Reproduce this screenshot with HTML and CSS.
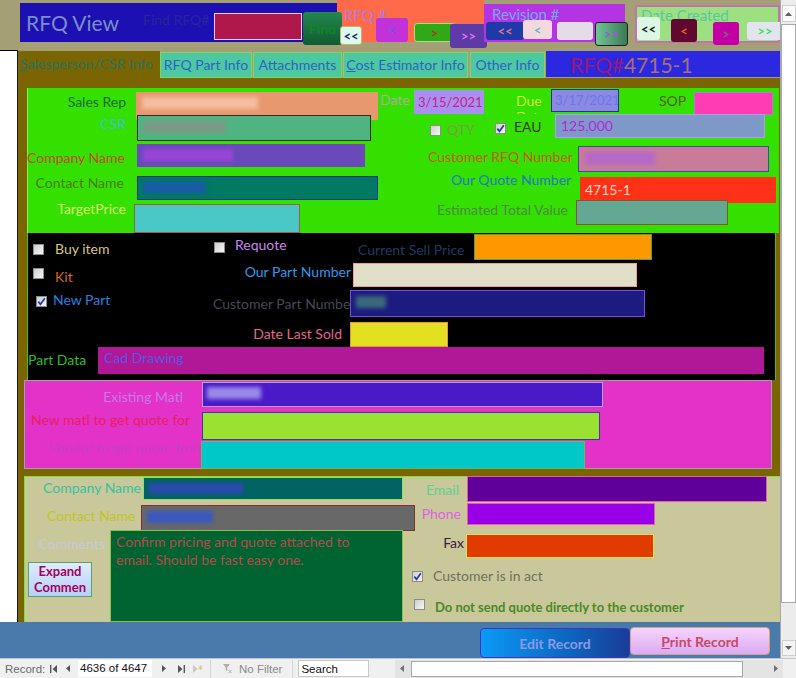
FILE: index.html
```html
<!DOCTYPE html>
<html>
<head>
<meta charset="utf-8">
<title>RFQ View</title>
<link rel="stylesheet" href="styles.css">
</head>
<body>
<div class="screen">
  <div class="app">
    <header class="hdr">
      <div class="title-box">
        <span class="title">RFQ View</span>
        <span class="lbl find-label">Find RFQ#</span>
        <span class="find-input"></span>
        <span class="btn find-btn">Find</span>
      </div>
      <div class="navbox rfq-box">
        <span class="nav-label">RFQ #</span>
        <div class="nav-btns">
          <span class="btn r1">&lt;&lt;</span>
          <span class="btn r2">&lt;</span>
          <span class="btn r3">&gt;</span>
          <span class="btn r4">&gt;&gt;</span>
        </div>
      </div>
      <div class="navbox rev-box">
        <span class="nav-label">Revision #</span>
        <div class="nav-btns">
          <span class="btn v1">&lt;&lt;</span>
          <span class="btn v2">&lt;</span>
          <span class="btn v3"></span>
          <span class="btn v4">&gt;&gt;</span>
        </div>
      </div>
      <div class="navbox dc-box">
        <span class="nav-label">Date Created</span>
        <div class="nav-btns">
          <span class="btn d1">&lt;&lt;</span>
          <span class="btn d2">&lt;</span>
          <span class="btn d3">&gt;</span>
          <span class="btn d4">&gt;&gt;</span>
        </div>
      </div>
    </header>

    <div class="main">
      <div class="selector"></div>
      <div class="form">
        <nav class="tabs">
          <span class="tab-active"><u>S</u>alesperson/CSR Info</span>
          <span class="tab t-part">RFQ Part Info</span>
          <span class="tab t-att">Attachments</span>
          <span class="tab t-cost"><u>C</u>ost Estimator Info</span>
          <span class="tab t-other">Other Info</span>
          <span class="rfq-banner"><span class="rb-a">RFQ#</span><span class="rb-b">4715-1</span></span>
        </nav>

        <div class="page">
          <section class="sec-green">
            <div class="row ra">
              <span class="lbl r sales-l">Sales Rep</span>
              <div class="fld sales-f"><i class="blur bl-sales"></i></div>
              <span class="lbl date-l">Date</span>
              <div class="fld date-f">3/15/2021</div>
              <span class="lbl due-l">Due Date</span>
              <div class="fld due-f">3/17/2021</div>
              <span class="lbl sop-l">SOP</span>
              <div class="fld sop-f"></div>
            </div>
            <div class="row rb">
              <span class="lbl r csr-l">CSR</span>
              <div class="fld csr-f"><i class="blur bl-csr"></i></div>
              <span class="cb qty-cb"></span>
              <span class="lbl qty-l">QTY</span>
              <span class="cb eau-cb"><svg width="9" height="9" viewBox="0 0 9 9"><path d="M1.3 4.6 L3.5 7.3 L7.8 1.2" fill="none" stroke="#2b3a9e" stroke-width="1.7"/></svg></span>
              <span class="lbl eau-l">EAU</span>
              <div class="fld eau-f">125,000</div>
            </div>
            <div class="row rc">
              <span class="lbl r co-l">Company Name</span>
              <div class="fld co-f"><i class="blur bl-co"></i></div>
              <span class="lbl r crfq-l">Customer RFQ Number</span>
              <div class="fld crfq-f"><i class="blur bl-crfq"></i></div>
            </div>
            <div class="row rd">
              <span class="lbl r cn-l">Contact Name</span>
              <div class="fld cn-f"><i class="blur bl-cn"></i></div>
              <span class="lbl r oq-l">Our Quote Number</span>
              <div class="fld oq-f">4715-1</div>
            </div>
            <div class="row re">
              <span class="lbl r tp-l">TargetPrice</span>
              <div class="fld tp-f"></div>
              <span class="lbl r etv-l">Estimated Total Value</span>
              <div class="fld etv-f"></div>
            </div>
          </section>

          <section class="sec-black">
            <div class="row k1">
              <span class="cb buy-cb"></span>
              <span class="lbl buy-l">Buy item</span>
              <span class="cb req-cb"></span>
              <span class="lbl req-l">Requote</span>
              <span class="lbl r csp-l">Current Sell Price</span>
              <div class="fld csp-f"></div>
            </div>
            <div class="row k2">
              <span class="cb kit-cb"></span>
              <span class="lbl kit-l">Kit</span>
              <span class="lbl r opn-l">Our Part Number</span>
              <div class="fld opn-f"></div>
            </div>
            <div class="row k3">
              <span class="cb np-cb"><svg width="9" height="9" viewBox="0 0 9 9"><path d="M1.3 4.6 L3.5 7.3 L7.8 1.2" fill="none" stroke="#2b3a9e" stroke-width="1.7"/></svg></span>
              <span class="lbl np-l">New Part</span>
              <span class="lbl cpn-l">Customer Part Number</span>
              <div class="fld cpn-f"><i class="blur bl-cpn"></i></div>
            </div>
            <div class="row k4">
              <span class="lbl r dls-l">Date Last Sold</span>
              <div class="fld dls-f"></div>
            </div>
            <div class="row k5">
              <span class="lbl pd-l">Part Data</span>
              <div class="fld cad-f">Cad Drawing</div>
            </div>
          </section>

          <section class="sec-pink">
            <div class="row p1">
              <span class="lbl r em-l">Existing Matl</span>
              <div class="fld em-f"><i class="blur bl-em"></i></div>
            </div>
            <div class="row p2">
              <span class="lbl nm-l">New matl to get quote for</span>
              <div class="fld nm-f"></div>
            </div>
            <div class="row p3">
              <span class="lbl vq-l">Vendor to get quote from</span>
              <div class="fld vq-f"></div>
            </div>
          </section>

          <section class="sec-khaki">
            <div class="row q1">
              <span class="lbl r kcn-l">Company Name</span>
              <div class="fld kcn-f"><i class="blur bl-kcn"></i></div>
              <span class="lbl r email-l">Email</span>
              <div class="fld email-f"></div>
            </div>
            <div class="row q2">
              <span class="lbl r kct-l">Contact Name</span>
              <div class="fld kct-f"><i class="blur bl-kct"></i></div>
              <span class="lbl r phone-l">Phone</span>
              <div class="fld phone-f"></div>
            </div>
            <div class="row q3">
              <div class="kleft">
                <span class="lbl r cm-l">Comments</span>
                <span class="expand-btn">Expand<br>Commen</span>
              </div>
              <div class="cm-f">Confirm pricing and quote attached to<br>email. Should be fast easy one.</div>
              <div class="kright">
                <div class="row fax-row">
                  <span class="lbl r fax-l">Fax</span>
                  <div class="fld fax-f"></div>
                </div>
                <div class="row chk1">
                  <span class="cb"><svg width="9" height="9" viewBox="0 0 9 9"><path d="M1.3 4.6 L3.5 7.3 L7.8 1.2" fill="none" stroke="#2b3a9e" stroke-width="1.7"/></svg></span>
                  <span class="lbl act-l">Customer is in act</span>
                </div>
                <div class="row chk2">
                  <span class="cb"></span>
                  <span class="lbl dns-l">Do not send quote directly to the customer</span>
                </div>
              </div>
            </div>
          </section>
        </div>
      </div>
    </div>

    <div class="band">
      <span class="btn edit-btn">Edit Record</span>
      <span class="btn print-btn"><span><u>P</u>rint Record</span></span>
    </div>
  </div>

  <aside class="vscroll">
    <span class="vs-up"><svg width="7" height="4" viewBox="0 0 7 4"><path d="M0 4 L3.5 0 L7 4Z" fill="#606060"/></svg></span>
    <span class="vs-thumb"></span>
    <span class="vs-down"><svg width="7" height="4" viewBox="0 0 7 4"><path d="M0 0 L3.5 4 L7 0Z" fill="#606060"/></svg></span>
  </aside>

  <footer class="status">
    <span class="st-rec">Record:</span>
    <svg class="ic ic-first" width="7" height="8" viewBox="0 0 7 8"><rect x="0" y="0" width="1.4" height="8" fill="#555"/><path d="M7 0 L2.5 4 L7 8Z" fill="#555"/></svg>
    <svg class="ic ic-prev" width="4" height="7" viewBox="0 0 4 7"><path d="M4 0 L0 3.5 L4 7Z" fill="#555"/></svg>
    <span class="st-box">4636 of 4647</span>
    <svg class="ic ic-next" width="4" height="7" viewBox="0 0 4 7"><path d="M0 0 L4 3.5 L0 7Z" fill="#555"/></svg>
    <svg class="ic ic-last" width="7" height="8" viewBox="0 0 7 8"><path d="M0 0 L4.5 4 L0 8Z" fill="#555"/><rect x="5.6" y="0" width="1.4" height="8" fill="#555"/></svg>
    <svg class="ic ic-new" width="10" height="8" viewBox="0 0 10 8"><path d="M0 0 L4.5 4 L0 8Z" fill="#c8c8c8"/><path d="M7.5 0.5 V5 M5.5 1.5 L9.5 4 M9.5 1.5 L5.5 4" stroke="#e0c878" stroke-width="1"/></svg>
    <span class="st-sep"></span>
    <svg class="ic ic-filter" width="9" height="9" viewBox="0 0 9 9"><path d="M0 0 H7 L4.3 3.5 V7 L2.7 6 V3.5Z" fill="#b0b0b0"/><path d="M5.5 6 L8.5 9 M8.5 6 L5.5 9" stroke="#b0b0b0" stroke-width="1"/></svg>
    <span class="st-nofilter">No Filter</span>
    <span class="st-sep sep2"></span>
    <span class="st-search">Search</span>
    <span class="hscroll">
      <span class="hs-left"><svg width="4" height="7" viewBox="0 0 4 7"><path d="M4 0 L0 3.5 L4 7Z" fill="#707070"/></svg></span>
      <span class="hs-thumb"></span>
      <span class="hs-right"><svg width="4" height="7" viewBox="0 0 4 7"><path d="M0 0 L4 3.5 L0 7Z" fill="#707070"/></svg></span>
    </span>
  </footer>
</div>
</body>
</html>
```

FILE: styles.css
```css
* { box-sizing: border-box; }
body {
  margin: 0;
  width: 796px;
  height: 678px;
  overflow: hidden;
  font-family: Lato, "Liberation Sans", sans-serif;
  font-size: 14px;
  background: #f0f0f0;
}
.screen {
  display: grid;
  grid-template-columns: 780px 16px;
  grid-template-rows: 658px 20px;
  width: 796px;
  height: 678px;
}
.app {
  display: flex;
  flex-direction: column;
  width: 780px;
  height: 658px;
  overflow: hidden;
}

/* generic */
.row { display: flex; align-items: flex-start; flex-shrink: 0; }
.lbl { flex-shrink: 0; height: 16px; line-height: 16px; white-space: nowrap; font-size: 14px; }
.r { text-align: right; }
.fld { flex-shrink: 0; font-size: 14px; white-space: nowrap; overflow: hidden; }
.blur { display: block; filter: blur(2px); }
.btn {
  flex-shrink: 0;
  display: flex;
  align-items: center;
  justify-content: center;
  font-weight: 700;
  font-size: 13px;
  border-radius: 3px;
  white-space: nowrap;
}
.cb {
  flex-shrink: 0;
  width: 11px;
  height: 11px;
  border: 1px solid #8c8c8c;
  background: linear-gradient(135deg, #cfcfcf, #f6f6f6);
  display: flex;
  align-items: center;
  justify-content: center;
}

/* header */
.hdr {
  height: 50px;
  flex-shrink: 0;
  background: #a49f75;
  display: flex;
  align-items: flex-start;
  padding-left: 20px;
  overflow: hidden;
}
.title-box {
  flex-shrink: 0;
  width: 317px;
  height: 39px;
  margin-top: 3px;
  background: #1c10b2;
  display: flex;
  align-items: flex-start;
}
.title {
  flex-shrink: 0;
  width: 117px;
  margin-left: 6px;
  margin-top: 6px;
  font-size: 21px;
  line-height: 28px;
  color: #7d8ccc;
  white-space: nowrap;
}
.find-label { width: 71px; margin-top: 9px; color: #2b2498; }
.find-input {
  flex-shrink: 0;
  width: 88px;
  height: 27px;
  margin-top: 10px;
  background: #b0184c;
  border: 1px solid #f0c8e8;
}
.find-btn {
  position: relative;
  z-index: 2;
  width: 39px;
  height: 33px;
  margin-left: 1px;
  margin-top: 9px;
  background: linear-gradient(180deg, #24884f, #0f5a32);
  color: #0f8526;
  font-size: 14px;
}
.navbox { flex-shrink: 0; display: grid; }
.navbox > * { grid-area: 1 / 1; }
.nav-label { font-size: 15px; line-height: 18px; white-space: nowrap; }
.nav-btns { display: flex; align-items: flex-start; }

.rfq-box { width: 147px; height: 42px; background: #ff6a48; }
.rfq-box .nav-label { padding: 6px 0 0 7px; color: #b878dc; }
.r1 { position: relative; z-index: 3; margin-left: 3px; margin-top: 26px; width: 22px; height: 19px; background: #dcfaf0; border: 1px solid #c8b070; color: #102060; }
.r2 { margin-left: 14px; margin-top: 18px; width: 32px; height: 24px; background: #c232d8; color: #5a62e0; }
.r3 { margin-left: 6px; margin-top: 23px; width: 41px; height: 19px; background: #30a818; border: 1px solid #a4e080; color: #a04020; }
.r4 { margin-left: -5px; margin-top: 24px; width: 37px; height: 24px; background: #5c3aa8; color: #e070f0; }

.rev-box { width: 141px; height: 38px; margin-top: 4px; background: #b434e4; }
.rev-box .nav-label { padding: 1px 0 0 8px; color: #72a8f8; }
.v1 { margin-left: 2px; margin-top: 18px; width: 38px; height: 18px; background: #1e3aa8; color: #f07080; }
.v2 { margin-left: -1px; margin-top: 16px; width: 29px; height: 19px; background: #f4d8e0; color: #50c0b0; }
.v3 { margin-left: 5px; margin-top: 18px; width: 36px; height: 18px; background: #e4dce8; }
.v4 { margin-left: 2px; margin-top: 18px; width: 33px; height: 24px; background: linear-gradient(90deg, #72c492, #3a7a58); border: 1px solid #202020; color: #a452e0; }

.dc-box { width: 145px; height: 38px; margin-top: 5px; margin-left: 10px; background: #9ce082; border: 2px solid #c472b2; }
.dc-box .nav-label { padding: 0 0 0 4px; line-height: 16px; color: #58c8a0; }
.d1 { margin-top: 10px; width: 23px; height: 23px; background: #dcf8e4; color: #101010; }
.d2 { margin-left: 11px; margin-top: 12px; width: 26px; height: 23px; background: #600830; color: #f06020; }
.d3 { margin-left: 16px; margin-top: 15px; width: 26px; height: 23px; background: #c400a4; color: #7a6a7a; }
.d4 { margin-left: 8px; margin-top: 15px; width: 36px; height: 18px; background: #e4e4f0; color: #40e040; }

/* main */
.main { display: flex; height: 572px; flex-shrink: 0; }
.selector {
  width: 18px;
  flex-shrink: 0;
  background: #fff;
  border-top: 1px solid #000;
  border-right: 1px solid #1a1a1a;
}
.form { width: 762px; display: flex; flex-direction: column; }
.tabs {
  height: 28px;
  flex-shrink: 0;
  display: flex;
  align-items: flex-start;
  background: #a49f75;
}
.tab {
  flex-shrink: 0;
  height: 26px;
  margin-top: 2px;
  line-height: 24px;
  text-align: center;
  white-space: nowrap;
  font-size: 14px;
  background: #4ec8a2;
  border: 1px solid #86d45c;
  color: #2a66c0;
}
.tab-active {
  flex-shrink: 0;
  width: 142px;
  height: 27px;
  margin-top: 1px;
  padding-left: 2px;
  line-height: 26px;
  white-space: nowrap;
  font-size: 14px;
  background: #7b6402;
  color: #25745f;
}
.t-part { width: 92px; }
.t-att { width: 89px; margin-left: 1px; }
.t-cost { width: 125px; margin-left: 1px; }
.t-other { width: 75px; margin-left: 2px; }
.rfq-banner {
  flex-shrink: 0;
  width: 234px;
  height: 26px;
  margin-left: 1px;
  margin-top: 1px;
  padding-left: 24px;
  background: #2c28e0;
  font-size: 21px;
  line-height: 28px;
  white-space: nowrap;
}
.rb-a { color: #9a1878; }
.rb-b { color: #a87070; }

.page {
  flex: 1;
  background: #7b6402;
  padding-top: 10px;
  overflow: hidden;
  display: flex;
  flex-direction: column;
}

/* green section */
.sec-green {
  flex-shrink: 0;
  margin-left: 9px;
  width: 752px;
  height: 145px;
  background: #33e000;
  box-shadow: inset 1px 0 0 #7cf060;
}
.ra { height: 26px; }
.rb { height: 27px; }
.rc { height: 32px; }
.rd { height: 27px; }
.re { height: 33px; }

.sales-l { width: 99px; margin-top: 6px; color: #1f6b35; }
.sales-f { margin-left: 10px; margin-top: 4px; width: 242px; height: 28px; background: #e8986e; }
.bl-sales { margin: 5px 0 0 6px; width: 116px; height: 12px; background: #f4bea0; }
.date-l { width: 32px; margin-top: 4px; padding-left: 2px; color: #b2aaa0; }
.date-f { margin-left: 4px; margin-top: 2px; width: 70px; height: 24px; background: #a890f0; color: #c8208e; padding-left: 4px; line-height: 24px; font-size: 13px; }
.due-l { margin-left: 32px; width: 35px; height: 26px; padding-top: 5px; white-space: normal; overflow: hidden; color: #c8f040; }
.due-f { width: 68px; height: 23px; margin-top: 1px; background: #8c88e4; border: 1px solid #283090; color: #6878e8; padding-left: 3px; line-height: 21px; font-size: 13px; }
.sop-l { margin-left: 40px; width: 30px; margin-top: 5px; color: #566010; }
.sop-f { margin-left: 5px; margin-top: 4px; width: 79px; height: 23px; background: #ff3cb4; border: 1px solid #a080e0; }

.csr-l { width: 99px; margin-top: 2px; color: #38c4d0; }
.csr-f { margin-left: 11px; margin-top: 1px; width: 234px; height: 26px; background: #50b482; border: 1px solid #2c2c2c; }
.bl-csr { margin: 5px 0 0 5px; width: 83px; height: 12px; background: #7c9a86; }
.qty-cb { margin-left: 59px; margin-top: 11px; }
.qty-l { margin-left: 6px; margin-top: 8px; width: 26px; color: #78a040; }
.eau-cb { margin-left: 22px; margin-top: 9px; }
.eau-l { margin-left: 8px; margin-top: 5px; width: 26px; color: #3a3a10; }
.eau-f { margin-left: 15px; width: 210px; height: 24px; background: #7e98c8; border: 1px solid #a8a0e8; color: #c020e0; padding-left: 5px; line-height: 22px; }

.co-l { width: 93px; margin-top: 9px; color: #c84818; }
.co-f { margin-left: 17px; margin-top: 3px; width: 228px; height: 23px; background: #6a4aba; }
.bl-co { margin: 5px 0 0 6px; width: 90px; height: 12px; background: #9a44d6; }
.crfq-l { margin-left: 63px; margin-top: 8px; width: 142px; color: #c85a12; }
.crfq-f { margin-left: 8px; margin-top: 5px; width: 191px; height: 26px; background: #c87c98; border: 1px solid #4048a8; }
.bl-crfq { margin: 5px 0 0 6px; width: 70px; height: 13px; background: #b468c8; }

.cn-l { width: 97px; margin-top: 2px; color: #4e7a14; }
.cn-f { margin-left: 13px; margin-top: 3px; width: 241px; height: 24px; background: #007a62; border: 1px solid #183878; }
.bl-cn { margin: 5px 0 0 5px; width: 63px; height: 11px; background: #1a5aa8; }
.oq-l { margin-left: 73px; margin-top: -1px; width: 119px; color: #2478c8; }
.oq-f { margin-left: 10px; margin-top: 4px; width: 196px; height: 26px; background: #ff3218; color: #f8d8c0; padding-left: 5px; line-height: 26px; }

.tp-l { width: 99px; margin-top: 1px; color: #d8f070; }
.tp-f { margin-left: 8px; margin-top: 4px; width: 166px; height: 29px; background: #4ac8c8; border: 1px solid #a06040; }
.etv-l { margin-left: 134px; margin-top: 2px; width: 134px; color: #4c8a44; }
.etv-f { margin-left: 8px; width: 152px; height: 25px; background: #62a892; border: 1px solid #905030; }

/* black section */
.sec-black {
  flex-shrink: 0;
  margin-left: 9px;
  width: 749px;
  height: 147px;
  background: #000;
  box-shadow: inset 1px 0 0 #40c020, inset -1px 0 0 #40c020;
}
.k1 { height: 27px; }
.k2 { height: 28px; }
.k3 { height: 30px; }
.k4 { height: 29px; }
.k5 { height: 33px; }
.buy-cb { margin-left: 6px; margin-top: 11px; }
.buy-l { margin-left: 11px; margin-top: 8px; width: 60px; color: #d8c878; }
.req-cb { margin-left: 99px; margin-top: 9px; }
.req-l { margin-left: 10px; margin-top: 4px; width: 60px; color: #c888e8; }
.csp-l { margin-left: 63px; margin-top: 9px; width: 106px; overflow: hidden; color: #1e3a60; }
.csp-f { margin-left: 10px; margin-top: 1px; width: 178px; height: 26px; background: #ff9800; border: 1px solid #5aa040; }
.kit-cb { margin-left: 6px; margin-top: 8px; }
.kit-l { margin-left: 11px; margin-top: 9px; width: 30px; color: #d86818; }
.opn-l { margin-left: 146px; margin-top: 4px; width: 120px; color: #3498e8; }
.opn-f { margin-left: 2px; margin-top: 3px; width: 284px; height: 24px; background: #e2dfc8; border: 1px solid #f09a9a; }
.np-cb { margin-left: 9px; margin-top: 8px; }
.np-l { margin-left: 6px; margin-top: 4px; width: 70px; color: #2a80e0; }
.cpn-l { margin-left: 90px; margin-top: 8px; width: 137px; overflow: hidden; color: #404a58; }
.cpn-f { margin-top: 2px; width: 295px; height: 27px; background: #1c1c80; border: 1px solid #8a44e0; }
.bl-cpn { margin: 5px 0 0 5px; width: 30px; height: 12px; background: #3a6a7a; }
.dls-l { margin-left: 195px; margin-top: 8px; width: 120px; color: #e06890; }
.dls-f { margin-left: 8px; margin-top: 4px; width: 98px; height: 25px; background: #e2e020; border: 1px solid #f09040; }
.pd-l { margin-left: 1px; margin-top: 5px; width: 64px; color: #28c028; }
.cad-f { margin-left: 6px; width: 666px; height: 27px; background: #b01898; color: #5858e0; padding-left: 6px; line-height: 22px; }

/* pink section */
.sec-pink {
  flex-shrink: 0;
  margin-left: 6px;
  width: 748px;
  height: 89px;
  background: #e232c8;
  box-shadow: inset 0 0 0 1px #a4a0a4;
}
.p1 { height: 28px; }
.p2 { height: 32px; }
.p3 { height: 29px; }
.em-l { width: 159px; margin-top: 9px; color: #c878e8; }
.em-f { margin-left: 19px; margin-top: 2px; width: 401px; height: 25px; background: #4a1ac8; border: 1px solid #b8a0c8; }
.bl-em { margin: 4px 0 0 4px; width: 54px; height: 12px; background: #9a8ae8; }
.nm-l { margin-left: 7px; margin-top: 4px; width: 160px; color: #e8205e; }
.nm-f { margin-left: 11px; margin-top: 4px; width: 398px; height: 28px; background: #9ae232; border: 1px solid #3040a0; }
.vq-l { margin-left: 24px; margin-top: 0; width: 152px; color: #c93fc4; }
.vq-f { margin-left: 1px; margin-top: 1px; width: 384px; height: 28px; background: #00c8c8; border: 1px solid #60c060; }

/* khaki section */
.sec-khaki {
  flex-shrink: 0;
  margin-left: 6px;
  margin-top: 7px;
  width: 756px;
  height: 160px;
  background: #c8c89a;
  box-shadow: inset 1px 1px 0 #80e040;
}
.q1 { height: 27px; }
.q2 { height: 27px; }
.kcn-l { margin-left: 19px; margin-top: 4px; width: 98px; color: #34c4a0; }
.kcn-f { margin-left: 2px; margin-top: 1px; width: 260px; height: 23px; background: #006462; border: 1px solid #90e060; }
.bl-kcn { margin: 5px 0 0 5px; width: 94px; height: 11px; background: #2a4ab0; }
.email-l { margin-left: 22px; margin-top: 6px; width: 34px; color: #60d090; }
.email-f { margin-left: 8px; width: 300px; height: 26px; background: #60009a; border: 1px solid #e060a0; }
.kct-l { margin-left: 23px; margin-top: 5px; width: 86px; color: #c4c428; }
.kct-f { margin-left: 8px; margin-top: 2px; width: 274px; height: 26px; background: #686868; border: 1px solid #803030; }
.bl-kct { margin: 5px 0 0 5px; width: 66px; height: 12px; background: #3a58c0; }
.phone-l { margin-left: 6px; margin-top: 3px; width: 40px; color: #e060e8; }
.phone-f { margin-left: 6px; width: 188px; height: 22px; background: #9a00e8; border: 1px solid #e060a0; }

.kleft { flex-shrink: 0; width: 86px; display: flex; flex-direction: column; }
.cm-l { width: 81px; margin-top: 6px; color: #c4ccd8; }
.expand-btn {
  margin-left: 4px;
  margin-top: 10px;
  width: 64px;
  height: 35px;
  background: linear-gradient(180deg, #dcecfc, #b8d0f8);
  border: 1px solid #5aa070;
  color: #a4005c;
  font-weight: 700;
  font-size: 13px;
  line-height: 16px;
  text-align: center;
  overflow: hidden;
}
.cm-f {
  flex-shrink: 0;
  width: 293px;
  height: 92px;
  background: #006432;
  border: 1px solid #90c040;
  color: #b84848;
  padding: 2px 5px;
  font-size: 14px;
  line-height: 18px;
  white-space: nowrap;
}
.kright { flex-shrink: 0; display: flex; flex-direction: column; }
.fax-row { height: 28px; }
.fax-l { margin-left: 40px; margin-top: 5px; width: 21px; color: #401840; }
.fax-f { margin-left: 2px; margin-top: 4px; width: 188px; height: 24px; background: #e03c00; border: 1px solid #f0e040; }
.chk1 { margin-top: 10px; margin-left: 9px; height: 16px; align-items: center; }
.act-l { margin-left: 10px; color: #707060; }
.chk2 { margin-top: 14px; margin-left: 11px; height: 16px; align-items: flex-start; }
.chk2 .cb { margin-top: 1px; }
.dns-l { margin-left: 10px; margin-top: 1px; color: #4a8a24; font-weight: 700; font-size: 13px; }

/* bottom band */
.band {
  height: 36px;
  flex-shrink: 0;
  background: #4a7aab;
  display: flex;
  align-items: flex-start;
  padding-left: 480px;
}
.edit-btn {
  width: 150px;
  height: 30px;
  margin-top: 6px;
  background: linear-gradient(90deg, #0a9af8, #0e60b8 65%, #1a3c98);
  border: 1px solid #3a3ab8;
  border-radius: 4px;
  color: #8a9ae8;
  font-size: 14px;
}
.print-btn {
  width: 140px;
  height: 28px;
  margin-top: 5px;
  background: linear-gradient(180deg, #f6d4fb, #dcaaf2);
  border: 1px solid #d4a47a;
  border-radius: 4px;
  color: #c84868;
  font-size: 14px;
}

/* vertical scrollbar */
.vscroll {
  display: flex;
  flex-direction: column;
  align-items: center;
  background: #ececec;
  border-left: 1px solid #a8a8a8;
}
.vs-up {
  width: 14px;
  height: 17px;
  margin-top: 5px;
  background: #fafafa;
  border: 1px solid #cfcfcf;
  display: flex;
  align-items: center;
  justify-content: center;
}
.vs-thumb {
  width: 15px;
  height: 579px;
  margin-top: 2px;
  background: #fff;
  border: 1px solid #a8a8a8;
}
.vs-down {
  width: 14px;
  height: 16px;
  margin-top: auto;
  margin-bottom: 2px;
  background: #f4f4f4;
  border: 1px solid #cfcfcf;
  display: flex;
  align-items: center;
  justify-content: center;
}

/* status bar */
.status {
  grid-column: 1 / 3;
  display: flex;
  align-items: center;
  height: 20px;
  background: #f0f0f0;
  border-top: 1px solid #c4c4c4;
  font-family: "Liberation Sans", Arial, sans-serif;
  font-size: 11.5px;
  color: #6a6a6a;
  padding-left: 5px;
  white-space: nowrap;
}
.st-rec { width: 45px; }
.ic { flex-shrink: 0; }
.ic-prev { margin-left: 9px; }
.st-box {
  margin-left: 8px;
  width: 74px;
  height: 17px;
  line-height: 16px;
  padding-left: 2px;
  background: #fff;
  color: #111;
  font-size: 11.5px;
}
.ic-next { margin-left: 10px; }
.ic-last { margin-left: 12px; }
.ic-new { margin-left: 8px; }
.st-sep { width: 1px; height: 18px; margin-left: 7px; background: #d4d4d4; }
.ic-filter { margin-left: 12px; }
.st-nofilter { margin-left: 7px; color: #8a8a8a; }
.sep2 { margin-left: 10px; }
.st-search {
  margin-left: 5px;
  width: 71px;
  height: 17px;
  line-height: 16px;
  padding-left: 2px;
  background: #fff;
  border: 1px solid #c8c8c8;
  color: #111;
}
.hscroll {
  margin-left: 26px;
  width: 388px;
  height: 18px;
  display: flex;
  align-items: center;
  background: #e4e4e4;
}
.hs-left, .hs-right {
  width: 14px;
  height: 16px;
  display: flex;
  align-items: center;
  justify-content: center;
}
.hs-thumb {
  width: 332px;
  height: 16px;
  margin-left: 2px;
  background: #fff;
  border: 1px solid #a8a8a8;
}
.hs-right { margin-left: auto; }
```
